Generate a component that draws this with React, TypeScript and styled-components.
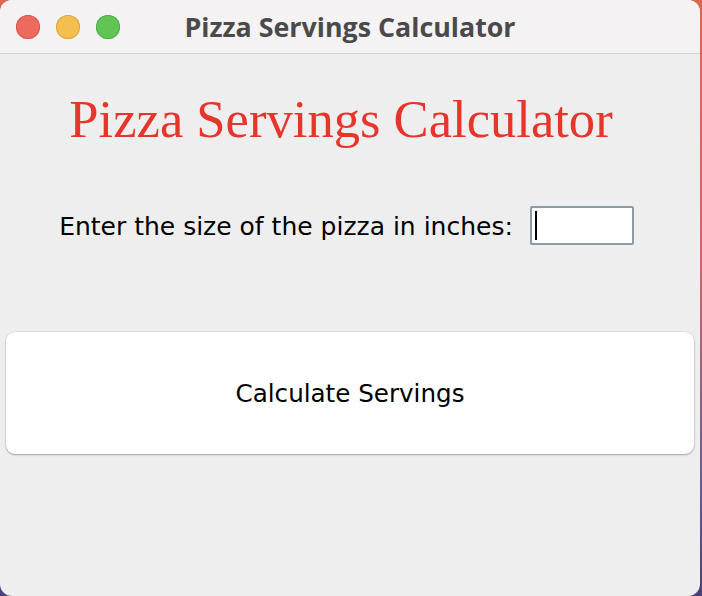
import React from "react";
import styled, { createGlobalStyle } from "styled-components";

const Global = createGlobalStyle`
  html, body { margin: 0; padding: 0; }
  body {
    width: 702px;
    height: 596px;
    overflow: hidden;
    background: linear-gradient(180deg, #d9694f 0%, #c86a6a 45%, #6a5a9a 80%, #4b3f7a 100%);
  }
`;

const Desktop = styled.div`
  width: 702px;
  height: 596px;
  display: flex;
`;

const Window = styled.div`
  width: 700px;
  height: 596px;
  border-radius: 12px;
  overflow: hidden;
  background: #eeeeee;
  display: flex;
  flex-direction: column;
`;

const TitleBar = styled.div`
  height: 53px;
  flex: none;
  background: #f4f2f3;
  border-bottom: 1px solid #d4d2d3;
  display: flex;
  align-items: center;
  position: relative;
`;

const Lights = styled.div`
  display: flex;
  gap: 16px;
  padding-left: 16px;
`;

const Light = styled.span<{ $c: string; $b: string }>`
  width: 24px;
  height: 24px;
  border-radius: 50%;
  background: ${(p) => p.$c};
  box-shadow: inset 0 0 0 1px ${(p) => p.$b};
`;

const Title = styled.div`
  position: absolute;
  left: 0;
  right: 0;
  text-align: center;
  font-family: "Open Sans", sans-serif;
  font-weight: 700;
  font-size: 26.8px;
  line-height: 30px;
  color: #4b4a4b;
`;

const Content = styled.div`
  flex: 1;
  display: flex;
  flex-direction: column;
  align-items: center;
`;

const Heading = styled.h1`
  margin: 35px 18px 0 0;
  font-family: "Liberation Serif", serif;
  font-weight: 400;
  font-size: 52.6px;
  line-height: 60px;
  color: #e6352b;
  white-space: nowrap;
`;

const Row = styled.div`
  margin-top: 57px;
  display: flex;
  align-items: flex-start;
  gap: 17px;
  padding-right: 7px;
`;

const Label = styled.label`
  margin-top: 6px;
  font-family: "DejaVu Sans", sans-serif;
  font-size: 25px;
  line-height: 30px;
  color: #000;
  white-space: nowrap;
`;

const Field = styled.div`
  width: 104px;
  height: 39px;
  box-sizing: border-box;
  border: 2px solid #8d9aab;
  border-radius: 2px;
  background: #fff;
  display: flex;
  align-items: center;
  padding-left: 3px;
`;

const Caret = styled.span`
  width: 2px;
  height: 29px;
  background: #000;
`;

const Button = styled.button`
  margin: 87px 6px 0;
  align-self: stretch;
  height: 122px;
  border: none;
  border-radius: 9px;
  background: #ffffff;
  box-shadow: 0 1px 2px rgba(0, 0, 0, 0.3), 0 0 0 0.5px rgba(0, 0, 0, 0.08);
  font-family: "DejaVu Sans", sans-serif;
  font-size: 24.6px;
  color: #000;
`;

export default function App() {
  return (
    <>
      <Global />
      <Desktop>
        <Window>
          <TitleBar>
            <Lights>
              <Light $c="#ee6a5f" $b="#d65a50" />
              <Light $c="#f5bf4f" $b="#d9a43f" />
              <Light $c="#61c554" $b="#4fae45" />
            </Lights>
            <Title>Pizza Servings Calculator</Title>
          </TitleBar>
          <Content>
            <Heading>Pizza Servings Calculator</Heading>
            <Row>
              <Label>Enter the size of the pizza in inches:</Label>
              <Field>
                <Caret />
              </Field>
            </Row>
            <Button>Calculate Servings</Button>
          </Content>
        </Window>
      </Desktop>
    </>
  );
}
